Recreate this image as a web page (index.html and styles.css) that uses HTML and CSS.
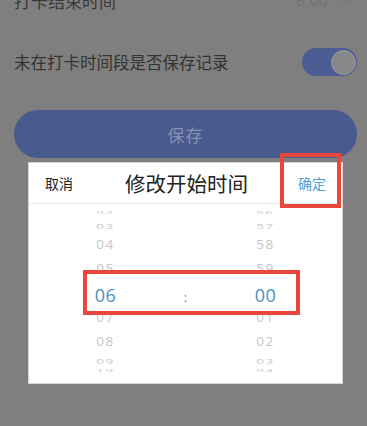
FILE: index.html
```html
<!DOCTYPE html>
<html lang="zh-CN">
<head>
  <meta charset="UTF-8">
  <meta name="viewport" content="width=device-width, initial-scale=1.0">
  <title>修改开始时间</title>
  <link rel="stylesheet" href="styles.css">
</head>
<body>
  <div class="settings">
    <div class="setting-row top-row">
      <span class="label">打卡结束时间</span>
      <span class="value">8:00 <span class="arrow">&gt;</span></span>
    </div>
    <div class="setting-row switch-row">
      <span class="label">未在打卡时间段是否保存记录</span>
      <div class="toggle"><div class="knob"></div></div>
    </div>
    <button class="save-btn">保存</button>
  </div>

  <div class="dialog">
    <div class="dialog-header">
      <span class="cancel">取消</span>
      <span class="dialog-title">修改开始时间</span>
      <span class="confirm">确定</span>
    </div>
    <div class="picker">
      <div class="column">
        <div class="item far h12">02</div>
        <div class="item near h14">03</div>
        <div class="item h22">04</div>
        <div class="item h26">05</div>
        <div class="item selected h28">06</div>
        <div class="item h16">07</div>
        <div class="item h32">08</div>
        <div class="item near h8">09</div>
        <div class="item far h12">10</div>
      </div>
      <div class="colon">:</div>
      <div class="column">
        <div class="item far h12">56</div>
        <div class="item near h14">57</div>
        <div class="item h22">58</div>
        <div class="item h26">59</div>
        <div class="item selected h28">00</div>
        <div class="item h16">01</div>
        <div class="item h32">02</div>
        <div class="item near h8">03</div>
        <div class="item far h12">04</div>
      </div>
    </div>
  </div>

  <!-- annotation boxes -->
  <div class="mark mark-confirm"></div>
  <div class="mark mark-time"></div>
</body>
</html>
```

FILE: styles.css
```css
body {
  margin: 0;
  width: 367px;
  height: 426px;
  overflow: hidden;
  background: #7f7f7f;
  font-family: 'Noto Sans CJK SC', 'Noto Sans', sans-serif;
  position: relative;
}

.settings {
  padding: 0 10px 0 14px;
}

.setting-row {
  display: flex;
  justify-content: space-between;
  align-items: center;
}

.top-row {
  margin-top: -16px;
  height: 32px;
}

.top-row .label {
  font-size: 17px;
  color: #3a3a3a;
}

.top-row .value {
  font-family: 'Open Sans', sans-serif;
  font-size: 16px;
  color: #727272;
  padding-right: 6px;
}

.top-row .arrow {
  margin-left: 10px;
  color: #767676;
}

.switch-row {
  margin-top: 32px;
  height: 28px;
}

.switch-row .label {
  font-size: 16.5px;
  color: #333;
}

.toggle {
  width: 55px;
  height: 28px;
  border-radius: 14px;
  background: #4b5c95;
  display: flex;
  justify-content: flex-end;
  align-items: center;
  padding: 0 1px;
  box-sizing: border-box;
}

.knob {
  width: 25px;
  height: 25px;
  border-radius: 50%;
  background: #878787;
  border: 1px solid #9a9a9a;
  box-sizing: border-box;
}

.save-btn {
  display: block;
  width: 343px;
  height: 48px;
  margin-top: 34px;
  border: none;
  border-radius: 24px;
  background: #485a8e;
  color: #8591b4;
  font-family: inherit;
  font-size: 17px;
  letter-spacing: 1px;
}

/* picker dialog */
.dialog {
  position: absolute;
  left: 29px;
  top: 163px;
  width: 313px;
  height: 220px;
  background: #fff;
  box-shadow: 0 0 0 1px #d6d6d6;
}

.dialog-header {
  height: 40px;
  border-bottom: 1px solid #e8e8e8;
  display: flex;
  align-items: center;
  justify-content: space-between;
  padding: 0 16px 0 16px;
}

.cancel {
  font-size: 14px;
  color: #222;
}

.dialog-title {
  font-size: 20.5px;
  color: #222;
  margin-left: 2px;
}

.confirm {
  font-size: 14px;
  color: #4a9fd4;
}

.picker {
  display: flex;
  justify-content: center;
  padding-top: 3px;
  font-family: 'Open Sans', sans-serif;
}

.column {
  width: 60px;
  display: flex;
  flex-direction: column;
  align-items: center;
}

.item {
  font-size: 13.5px;
  letter-spacing: 1.5px;
  color: #c6c6c6;
  overflow: visible;
}

.item.near {
  transform: scaleY(0.5);
}

.item.far {
  transform: scaleY(0.25);
}

.item.selected {
  font-size: 18px;
  letter-spacing: 0.5px;
  color: #4a8fc2;
}

.h8 { height: 8px; line-height: 8px; }
.h12 { height: 12px; line-height: 12px; }
.h14 { height: 14px; line-height: 14px; }
.h16 { height: 16px; line-height: 16px; }
.h22 { height: 22px; line-height: 22px; }
.h26 { height: 26px; line-height: 26px; }
.h28 { height: 28px; line-height: 28px; }
.h32 { height: 32px; line-height: 32px; }

.colon {
  width: 100px;
  text-align: center;
  padding-top: 81px;
  font-size: 13px;
  color: #5a9ab0;
}

/* red annotation boxes */
.mark {
  position: absolute;
  border: 4px solid #e8473e;
  box-sizing: border-box;
}

.mark-confirm {
  left: 280px;
  top: 153px;
  width: 61px;
  height: 55px;
}

.mark-time {
  left: 83px;
  top: 270px;
  width: 217px;
  height: 45px;
}
```
